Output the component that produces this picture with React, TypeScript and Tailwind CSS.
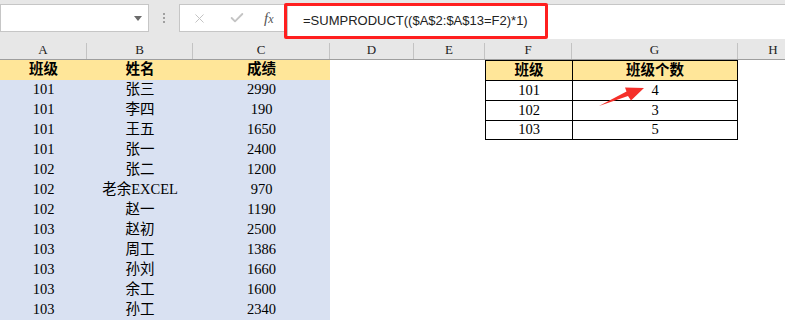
import { Check, X } from 'lucide-react';

const cols = [
  { key: 'A', w: 'w-[87px]' },
  { key: 'B', w: 'w-[106px]' },
  { key: 'C', w: 'w-[137px]' },
  { key: 'D', w: 'w-[84px]' },
  { key: 'E', w: 'w-[71px]' },
  { key: 'F', w: 'w-[87px]' },
  { key: 'G', w: 'w-[166px]' },
  { key: 'H', w: 'w-[70px]' },
];

const students = [
  ['101', '张三', '2990'],
  ['101', '李四', '190'],
  ['101', '王五', '1650'],
  ['101', '张一', '2400'],
  ['102', '张二', '1200'],
  ['102', '老余EXCEL', '970'],
  ['102', '赵一', '1190'],
  ['103', '赵初', '2500'],
  ['103', '周工', '1386'],
  ['103', '孙刘', '1660'],
  ['103', '余工', '1600'],
  ['103', '孙工', '2340'],
];

const summary = [
  ['101', '4'],
  ['102', '3'],
  ['103', '5'],
];

const cellFont = { fontFamily: '"Liberation Serif", "Noto Sans CJK SC", serif' };

export default function App() {
  const rows = [['班级', '姓名', '成绩'], ...students];

  return (
    <div className="relative w-[785px] h-[334px] overflow-hidden bg-white">
      {/* formula bar */}
      <div className="flex h-[41px] items-start bg-[#e7e7e7] pt-[4px]">
        <div className="flex h-[28px] w-[149px] items-center justify-end border border-[#c6c6c6] bg-white pr-[6px]">
          <svg width="8" height="5" viewBox="0 0 8 5">
            <polygon points="0,0 8,0 4,5" fill="#6b6b6b" />
          </svg>
        </div>
        <div className="flex w-[30px] flex-col items-center justify-center gap-[2px] pt-[9px]">
          <span className="h-[2px] w-[2px] bg-[#a0a0a0]" />
          <span className="h-[2px] w-[2px] bg-[#a0a0a0]" />
          <span className="h-[2px] w-[2px] bg-[#a0a0a0]" />
        </div>
        <div className="flex h-[28px] w-[108px] items-center border border-[#c6c6c6] bg-white">
          <X className="ml-[12px] h-[15px] w-[15px] text-[#c4c4c4]" strokeWidth={1.6} />
          <Check className="ml-[22px] h-[16px] w-[16px] text-[#c4c4c4]" strokeWidth={2.8} />
          <span
            className="ml-[19px] text-[15px] italic text-[#555]"
            style={{ fontFamily: '"Liberation Serif", serif' }}
          >
            f<span className="text-[12px]">x</span>
          </span>
        </div>
        <div className="flex h-[35px] flex-1 items-start border-t border-l border-[#c6c6c6] bg-white pl-[15px]">
          <span
            className="mt-[6px] text-[13px] text-[#222]"
            style={{ fontFamily: '"Liberation Sans", sans-serif' }}
          >
            =SUMPRODUCT(($A$2:$A$13=F2)*1)
          </span>
        </div>
      </div>

      {/* column headers */}
      <div className="flex h-[19px] border-b border-[#9e9e9e] bg-[#e7e7e7]">
        {cols.map((c, i) => (
          <div key={c.key} className={`${c.w} shrink-0 flex items-end`}>
            <div
              className="flex h-full flex-1 items-center justify-center text-[13px] text-[#222]"
              style={cellFont}
            >
              {c.key}
            </div>
            {i < cols.length - 1 && <div className="h-[16px] w-px bg-[#c3c3c3]" />}
          </div>
        ))}
      </div>

      {/* sheet rows */}
      <div className="text-[14.5px] text-black" style={cellFont}>
        {rows.map((r, ri) => {
          const head = ri === 0;
          const bg = head ? 'bg-[#ffe699] font-bold' : 'bg-[#d9e1f2]';
          const tableRow = ri < 4;
          const sum = ri === 0 ? ['班级', '班级个数'] : summary[ri - 1];
          const last = ri === 3 ? 'border-b' : '';
          const sumBg = head ? 'bg-[#ffe699] font-bold' : 'bg-white';
          return (
            <div key={ri} className="flex h-[20px]">
              <div className={`w-[87px] shrink-0 flex items-center justify-center ${bg}`}>{r[0]}</div>
              <div className={`w-[106px] shrink-0 flex items-center justify-center ${bg}`}>{r[1]}</div>
              <div className={`w-[137px] shrink-0 flex items-center justify-center ${bg}`}>{r[2]}</div>
              <div className="w-[84px] shrink-0" />
              <div className="w-[71px] shrink-0" />
              {tableRow ? (
                <>
                  <div
                    className={`w-[87px] shrink-0 flex items-center justify-center border-t border-l border-black ${last} ${sumBg}`}
                  >
                    {sum[0]}
                  </div>
                  <div
                    className={`w-[166px] shrink-0 flex items-center justify-center border-t border-l border-r border-black ${last} ${sumBg}`}
                  >
                    {sum[1]}
                  </div>
                </>
              ) : (
                <>
                  <div className="w-[87px] shrink-0" />
                  <div className="w-[166px] shrink-0" />
                </>
              )}
            </div>
          );
        })}
      </div>

      {/* annotations */}
      <div className="pointer-events-none absolute left-[284px] top-[3px] h-[36px] w-[264px] rounded-[2px] border-[3px] border-[#ff1f1f]" />
      <svg className="pointer-events-none absolute left-[0px] top-[0px]" width="785" height="334">
        <polygon
          points="599,106 628,96 631,100.5 644,88 625,87.5 626.5,91.5"
          fill="#f5302a"
        />
      </svg>
    </div>
  );
}
